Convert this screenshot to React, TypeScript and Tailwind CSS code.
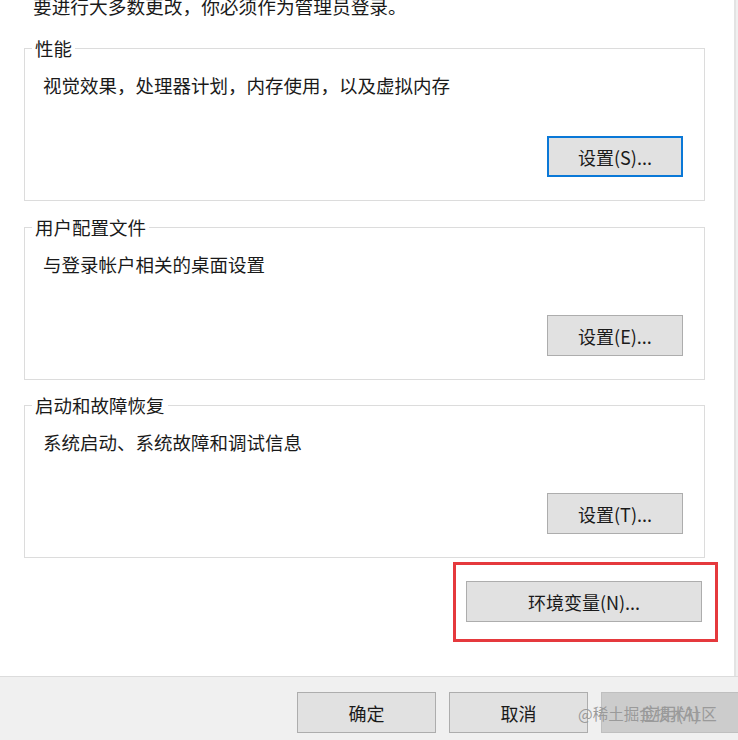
import React from "react";

const font = { fontFamily: '"Noto Sans CJK SC", "Noto Sans", sans-serif' };

function Btn({ label, focused }: { label: string; focused?: boolean }) {
  return (
    <button
      className={
        "self-end mr-[21px] mt-auto mb-[23px] w-[136px] h-[41px] bg-[#e1e1e1] text-[18px] text-[#1a1a1a] leading-none flex items-center justify-center " +
        (focused ? "border-2 border-[#0a78d7]" : "border border-[#adadad]")
      }
    >
      {label}
    </button>
  );
}

function Group({
  title,
  desc,
  btn,
  focused,
  mt,
}: {
  title: string;
  desc: string;
  btn: string;
  focused?: boolean;
  mt: string;
}) {
  return (
    <div className={"ml-[24px] w-[681px] h-[153px] border border-[#dcdcdc] flex flex-col " + mt}>
      <span className="-mt-[13px] ml-[7px] px-[3px] bg-white w-fit leading-[24px] text-[18.5px] text-[#1a1a1a]">
        {title}
      </span>
      <p className="ml-[18px] mt-[13px] leading-[24px] text-[18.5px] text-[#1a1a1a]">{desc}</p>
      <Btn label={btn} focused={focused} />
    </div>
  );
}

export default function App() {
  return (
    <div style={font} className="w-[738px] h-[740px] overflow-hidden bg-[#f0f0f0] flex flex-col">
      <div className="w-[736px] h-[676px] bg-white border-r-2 border-[#e3e3e3] flex flex-col">
        <p className="-mt-[6px] ml-[33px] leading-[24px] text-[18.7px] text-[#1a1a1a] whitespace-nowrap">
          要进行大多数更改，你必须作为管理员登录。
        </p>
        <Group
          mt="mt-[30px]"
          title="性能"
          desc="视觉效果，处理器计划，内存使用，以及虚拟内存"
          btn="设置(S)..."
          focused
        />
        <Group mt="mt-[26px]" title="用户配置文件" desc="与登录帐户相关的桌面设置" btn="设置(E)..." />
        <Group mt="mt-[25px]" title="启动和故障恢复" desc="系统启动、系统故障和调试信息" btn="设置(T)..." />
        <div className="ml-[453px] mt-[4px] w-[265px] h-[80px] border-[3px] border-[#e5393d] flex flex-col">
          <button className="ml-[10px] mt-[16px] w-[236px] h-[41px] bg-[#e1e1e1] border border-[#adadad] text-[18px] text-[#1a1a1a] leading-none flex items-center justify-center">
            环境变量(N)...
          </button>
        </div>
      </div>
      <div className="relative flex-1 border-t border-[#dcdcdc] flex items-start pt-[15px] pl-[297px] gap-[13px]">
        <button className="w-[139px] h-[41px] shrink-0 bg-[#e1e1e1] border border-[#adadad] text-[18px] text-[#1a1a1a] leading-none flex items-center justify-center">
          确定
        </button>
        <button className="w-[139px] h-[41px] shrink-0 bg-[#e1e1e1] border border-[#adadad] text-[18px] text-[#1a1a1a] leading-none flex items-center justify-center">
          取消
        </button>
        <button className="w-[139px] h-[41px] shrink-0 bg-[#cccccc] border border-[#bfbfbf] text-[18px] text-[#9a9a9a] leading-none flex items-center justify-center">
          应用(A)
        </button>
        <span className="absolute left-[578px] top-[25px] text-[15.5px] leading-[22px] text-[#9a9a9a] whitespace-nowrap">
          @稀土掘金技术社区
        </span>
      </div>
    </div>
  );
}
